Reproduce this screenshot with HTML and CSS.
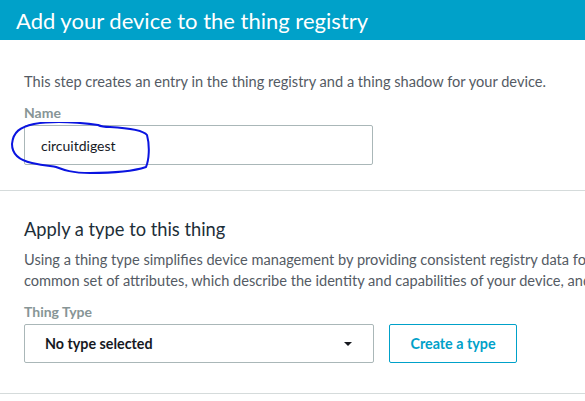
FILE: index.html
```html
<!DOCTYPE html>
<html>
<head>
<meta charset="utf-8">
<link rel="stylesheet" href="styles.css">
</head>
<body>
<div class="page">
  <header class="banner"><h1 class="banner-title">Add your device to the thing registry</h1></header>
  <section class="section first">
    <p class="intro">This step creates an entry in the thing registry and a thing shadow for your device.</p>
    <label class="field-label">Name</label>
    <div class="name-wrap">
      <div class="input">circuitdigest</div>
      <svg class="scribble" width="150" height="56" viewBox="0 0 150 56">
        <path d="M92 3 C70 0 44 -1 28 2 C14 5 7 10 6 22 C6 32 12 38 26 41 C40 44 46 44 50 45 C58 48 66 51 84 51 C108 51 128 49 140 45 C143 38 144 24 141 13 C137 8 122 6 104 5 C98 5 94 4 92 3 Z" fill="none" stroke="#0a14e0" stroke-width="2" stroke-linejoin="round"/>
      </svg>
    </div>
  </section>
  <section class="section second">
    <h2 class="sub-title">Apply a type to this thing</h2>
    <p class="desc">Using a thing type simplifies device management by providing consistent registry data for things that share a type. Types provide things with a<br>common set of attributes, which describe the identity and capabilities of your device, and a description.</p>
    <label class="field-label">Thing Type</label>
    <div class="type-row">
      <div class="select"><span>No type selected</span><svg class="caret" width="10" height="6" viewBox="0 0 10 6"><path d="M1 1 L9 1 L5 5 Z" fill="#16191f"/></svg></div>
      <button class="btn">Create a type</button>
    </div>
  </section>
</div>
</body>
</html>
```
FILE: styles.css
```css
* { box-sizing: border-box; }
html, body { margin: 0; padding: 0; background: #fff; }
body { font-family: Lato, "Open Sans", sans-serif; overflow: hidden; }
.page { width: 585px; height: 401px; overflow: hidden; }
.banner { background: #00a1c9; height: 40px; padding-left: 16px; display: flex; align-items: center; }
.banner-title { margin: 0; color: #fff; font-weight: 400; font-size: 22px; white-space: nowrap; line-height: 1; padding-top: 1px; }
.section { padding-left: 24px; border-bottom: 1px solid #d5dbdb; }
.first { height: 151px; padding-top: 32px; }
.intro { margin: 0; font-size: 14.6px; color: #545b64; line-height: 20px; white-space: nowrap; }
.field-label { display: block; margin-top: 11px; font-size: 14px; font-weight: 700; color: #879596; line-height: 20px; }
.name-wrap { position: relative; margin-top: 2px; width: 349px; }
.input { height: 40px; border: 1px solid #aab7b8; border-radius: 2px; padding-left: 16px; font-size: 14px; color: #16191f; display: flex; align-items: center; }
.scribble { position: absolute; left: -18px; top: -3px; }
.second { height: 203px; padding-top: 24px; }
.sub-title { margin: 0; font-size: 18.3px; font-weight: 400; color: #1d2e38; line-height: 28px; white-space: nowrap; }
.desc { margin: 6px 0 0; font-size: 14.6px; color: #545b64; line-height: 21px; white-space: nowrap; }
.type-row { display: flex; gap: 15px; margin-top: 2px; }
.select { width: 350px; height: 39px; border: 1px solid #aab7b8; border-radius: 2px; padding: 0 20px 0 20px; display: flex; align-items: center; justify-content: space-between; font-size: 14.3px; font-weight: 700; color: #16191f; }
.caret { display: block; }
.btn { width: 128px; height: 39px; border: 1px solid #00a1c9; border-radius: 2px; background: #fff; color: #00a1c9; font-family: inherit; font-size: 14.3px; font-weight: 700; padding: 0; }
```
